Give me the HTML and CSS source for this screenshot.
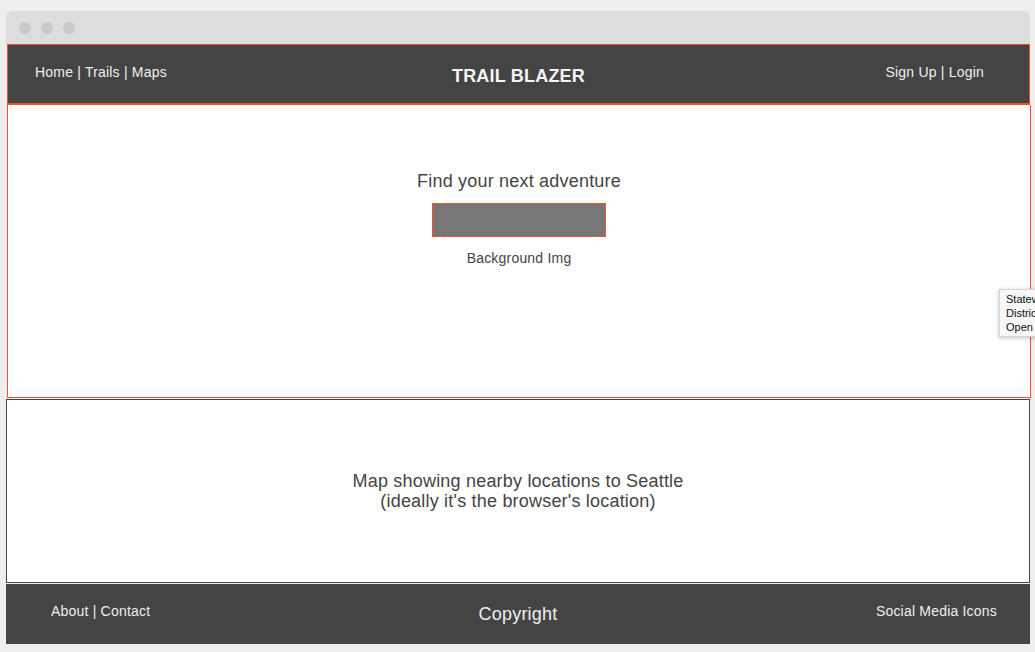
FILE: index.html
```html
<!DOCTYPE html>
<html>
<head>
<meta charset="utf-8">
<link rel="stylesheet" href="styles.css">
</head>
<body>
<div class="window">
  <div class="titlebar">
    <span class="dot"></span><span class="dot"></span><span class="dot"></span>
  </div>
  <header class="header">
    <nav class="nav-left">Home | Trails | Maps</nav>
    <div class="brand">TRAIL BLAZER</div>
    <nav class="nav-right">Sign Up | Login</nav>
  </header>
  <section class="hero">
    <h2 class="hero-title">Find your next adventure</h2>
    <div class="search-box"></div>
    <p class="hero-note">Background Img</p>
    <div class="tooltip">
      <div>Statewide</div>
      <div>District</div>
      <div>Open</div>
    </div>
  </section>
  <section class="map">
    <p class="map-text">Map showing nearby locations to Seattle<br>(ideally it's the browser's location)</p>
  </section>
  <footer class="footer">
    <div class="foot-left">About | Contact</div>
    <div class="foot-center">Copyright</div>
    <div class="foot-right">Social Media Icons</div>
  </footer>
</div>
</body>
</html>
```

FILE: styles.css
```css
html, body {
  margin: 0;
  padding: 0;
}
body {
  background: #eeeeee;
  font-family: "Liberation Sans", Arial, sans-serif;
  color: #444;
  letter-spacing: 0.2px;
  overflow: hidden;
  height: 652px;
}
.window {
  margin: 11px 0 0 6px;
  width: 1024px;
}
.titlebar {
  height: 33px;
  background: #dddddd;
  border-radius: 6px 6px 0 0;
  display: flex;
  align-items: center;
  gap: 10px;
  padding-left: 13px;
  box-sizing: border-box;
}
.dot {
  width: 12px;
  height: 12px;
  border-radius: 50%;
  background: #c9c9c9;
}
.header {
  margin-left: 1px;
  height: 61px;
  box-sizing: border-box;
  background: #444444;
  border: 1px solid #f4502b;
  border-bottom-width: 2px;
  display: grid;
  grid-template-columns: 1fr auto 1fr;
  align-items: start;
  padding: 19px 27px 0 27px;
  color: #efefef;
  font-size: 14px;
  line-height: 16px;
}
.nav-right {
  justify-self: end;
  padding-right: 18px;
}
.brand {
  font-weight: bold;
  font-size: 18px;
  line-height: 21px;
  margin-top: 2px;
  color: #f5f5f5;
}
.hero {
  position: relative;
  margin-left: 1px;
  width: 1024px;
  height: 293px;
  box-sizing: border-box;
  background: #ffffff;
  border: 1px solid #f4502b;
  border-top: none;
  display: flex;
  flex-direction: column;
  align-items: center;
  padding-top: 66px;
}
.hero-title {
  margin: 0;
  font-weight: normal;
  font-size: 18px;
  line-height: 21px;
  color: #444;
}
.search-box {
  width: 174px;
  height: 34px;
  box-sizing: border-box;
  margin-top: 11px;
  background: #777777;
  border: 1px solid #f4502b;
}
.hero-note {
  margin: 13px 0 0;
  font-size: 14px;
  line-height: 16px;
  color: #444;
}
.tooltip {
  position: absolute;
  left: 991px;
  top: 184px;
  width: 60px;
  padding: 2px 0 2px 6px;
  background: #f7f7f7;
  border: 1px solid #d4d4d4;
  box-shadow: 0 1px 4px rgba(0,0,0,0.25);
  font-size: 11px;
  line-height: 14px;
  letter-spacing: 0;
  color: #111;
  white-space: nowrap;
  overflow: hidden;
  z-index: 5;
}
.map {
  margin-top: 1px;
  height: 184px;
  box-sizing: border-box;
  width: 1024px;
  background: #ffffff;
  border: 1px solid #444;
  display: flex;
  align-items: center;
  justify-content: center;
}
.map-text {
  margin: 0;
  text-align: center;
  font-size: 18px;
  line-height: 20px;
  color: #444;
}
.footer {
  margin-top: 1px;
  height: 60px;
  width: 1024px;
  box-sizing: border-box;
  background: #444444;
  display: grid;
  grid-template-columns: 1fr auto 1fr;
  align-items: start;
  padding: 19px 33px 0 33px;
  color: #efefef;
  font-size: 14px;
  line-height: 16px;
}
.foot-left {
  padding-left: 12px;
}
.foot-center {
  font-size: 18px;
  line-height: 21px;
  margin-top: 1px;
}
.foot-right {
  justify-self: end;
}
```
